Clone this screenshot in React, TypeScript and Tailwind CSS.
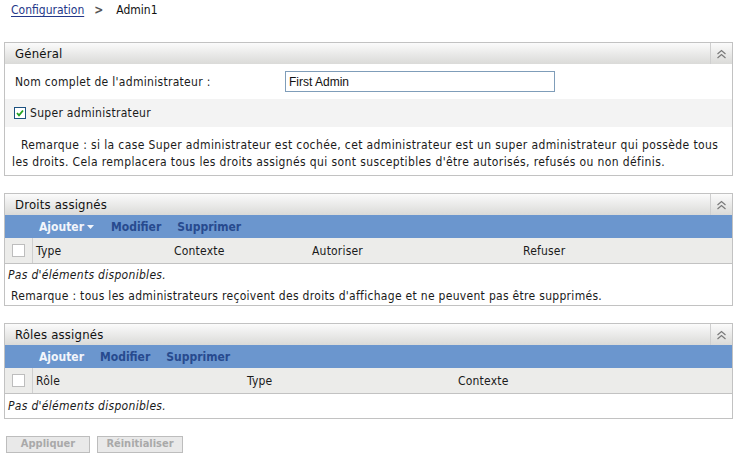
import React from "react";

function Collapse() {
  return (
    <div className="w-[22px] self-stretch border-l border-[#cfcfcf] flex items-center justify-center">
      <svg width="11" height="10" viewBox="0 0 11 10" fill="none" stroke="#7a7a7a" strokeWidth="1.2">
        <path d="M1.5 5 L5.5 1.5 L9.5 5" />
        <path d="M1.5 9 L5.5 5.5 L9.5 9" />
      </svg>
    </div>
  );
}

function PanelHeader({ title }: { title: string }) {
  return (
    <div className="h-[21px] flex items-center bg-gradient-to-b from-[#fbfbfb] to-[#dadad8]">
      <div className="flex-1 pl-[10px] text-[13px] text-[#111] leading-none tracking-[0.2px]">{title}</div>
      <Collapse />
    </div>
  );
}

function Box() {
  return <div className="w-[13px] h-[13px] bg-white border border-[#bdbdbd]" />;
}

export default function App() {
  return (
    <div className="w-[741px] h-[458px] bg-white font-['DejaVu_Sans_Condensed','DejaVu_Sans',sans-serif] text-[12px] text-[#1a1a1a] overflow-hidden">
      {/* breadcrumb */}
      <div className="h-[42px] pl-[11px] pt-[3px] flex items-start text-[12px] leading-[15px]">
        <span className="text-[#24388a] underline underline-offset-2">Configuration</span>
        <span className="ml-[10px] font-bold text-[#555]">&gt;</span>
        <span className="ml-[13px] text-[#111]">Admin1</span>
      </div>

      <div className="tracking-[0.3px]">
        {/* Général */}
        <div className="ml-[4px] w-[729px] border border-[#c2c2c2]">
          <PanelHeader title="Général" />
          <div className="h-[35px] flex items-center">
            <div className="w-[280px] pl-[10px]">Nom complet de l'administrateur :</div>
            <div className="w-[270px] h-[21px] border border-[#7f9db9] flex items-center pl-[3px] font-['Liberation_Sans',sans-serif] text-[12px] tracking-normal text-[#111]">
              First Admin
            </div>
          </div>
          <div className="h-[28px] bg-[#f3f3f3] flex items-center pl-[9px]">
            <div className="w-[12px] h-[12px] border border-[#1c5180] bg-white flex items-center justify-center">
              <svg width="8" height="8" viewBox="0 0 8 8">
                <path d="M1 4 L3 6.3 L7 1.5" stroke="#21a121" strokeWidth="1.8" fill="none" />
              </svg>
            </div>
            <span className="ml-[4px]">Super administrateur</span>
          </div>
          <div className="pt-[10px] pb-[4px] pl-[7px] pr-[4px] leading-[17px] indent-[9px] tracking-[0.38px]">
            Remarque : si la case Super administrateur est cochée, cet administrateur est un super administrateur qui possède tous
            les droits. Cela remplacera tous les droits assignés qui sont susceptibles d'être autorisés, refusés ou non définis.
          </div>
        </div>

        {/* Droits assignés */}
        <div className="ml-[4px] mt-[17px] w-[729px] border border-[#c2c2c2]">
          <PanelHeader title="Droits assignés" />
          <div className="h-[23px] bg-[#6b96ce] flex items-center pl-[34px] font-bold text-[12px] tracking-normal">
            <span className="text-[#f2f5fb]">Ajouter</span>
            <svg className="ml-[3px]" width="7" height="4" viewBox="0 0 7 4"><path d="M0 0 L7 0 L3.5 4 Z" fill="#f2f5fb" /></svg>
            <span className="ml-[17px] text-[#274a8e]">Modifier</span>
            <span className="ml-[16px] text-[#274a8e]">Supprimer</span>
          </div>
          <div className="h-[26px] bg-[#ececea] border-b border-[#c2c2c2] flex items-stretch tracking-[0.2px]">
            <div className="w-[28px] border-r border-[#cfcfcf] flex items-center pl-[7px]">
              <Box />
            </div>
            <div className="w-[141px] pl-[3px] flex items-center">Type</div>
            <div className="w-[138px] flex items-center">Contexte</div>
            <div className="w-[211px] flex items-center">Autoriser</div>
            <div className="flex-1 flex items-center">Refuser</div>
          </div>
          <div className="h-[22px] flex items-center pl-[3px] italic">Pas d'éléments disponibles.</div>
          <div className="h-[19px] flex items-center pl-[6px]">
            Remarque : tous les administrateurs reçoivent des droits d'affichage et ne peuvent pas être supprimés.
          </div>
        </div>

        {/* Rôles assignés */}
        <div className="ml-[4px] mt-[17px] w-[729px] border border-[#c2c2c2]">
          <PanelHeader title="Rôles assignés" />
          <div className="h-[23px] bg-[#6b96ce] flex items-center pl-[34px] font-bold text-[12px] tracking-normal">
            <span className="text-[#f2f5fb]">Ajouter</span>
            <span className="ml-[16px] text-[#274a8e]">Modifier</span>
            <span className="ml-[16px] text-[#274a8e]">Supprimer</span>
          </div>
          <div className="h-[26px] bg-[#ececea] border-b border-[#c2c2c2] flex items-stretch tracking-[0.2px]">
            <div className="w-[28px] border-r border-[#cfcfcf] flex items-center pl-[7px]">
              <Box />
            </div>
            <div className="w-[214px] pl-[3px] flex items-center">Rôle</div>
            <div className="w-[211px] flex items-center">Type</div>
            <div className="flex-1 flex items-center">Contexte</div>
          </div>
          <div className="h-[24px] flex items-center pl-[3px] italic">Pas d'éléments disponibles.</div>
        </div>
      </div>

      {/* buttons */}
      <div className="mt-[17px] pl-[6px] flex gap-[7px]">
        <div className="w-[84px] h-[17px] border border-[#bdbdbd] bg-[#e9e9e9] flex items-center justify-center font-bold text-[11px] text-[#a9a9a9]">
          Appliquer
        </div>
        <div className="w-[86px] h-[17px] border border-[#bdbdbd] bg-[#e9e9e9] flex items-center justify-center font-bold text-[11px] text-[#a9a9a9]">
          Réinitialiser
        </div>
      </div>
    </div>
  );
}
